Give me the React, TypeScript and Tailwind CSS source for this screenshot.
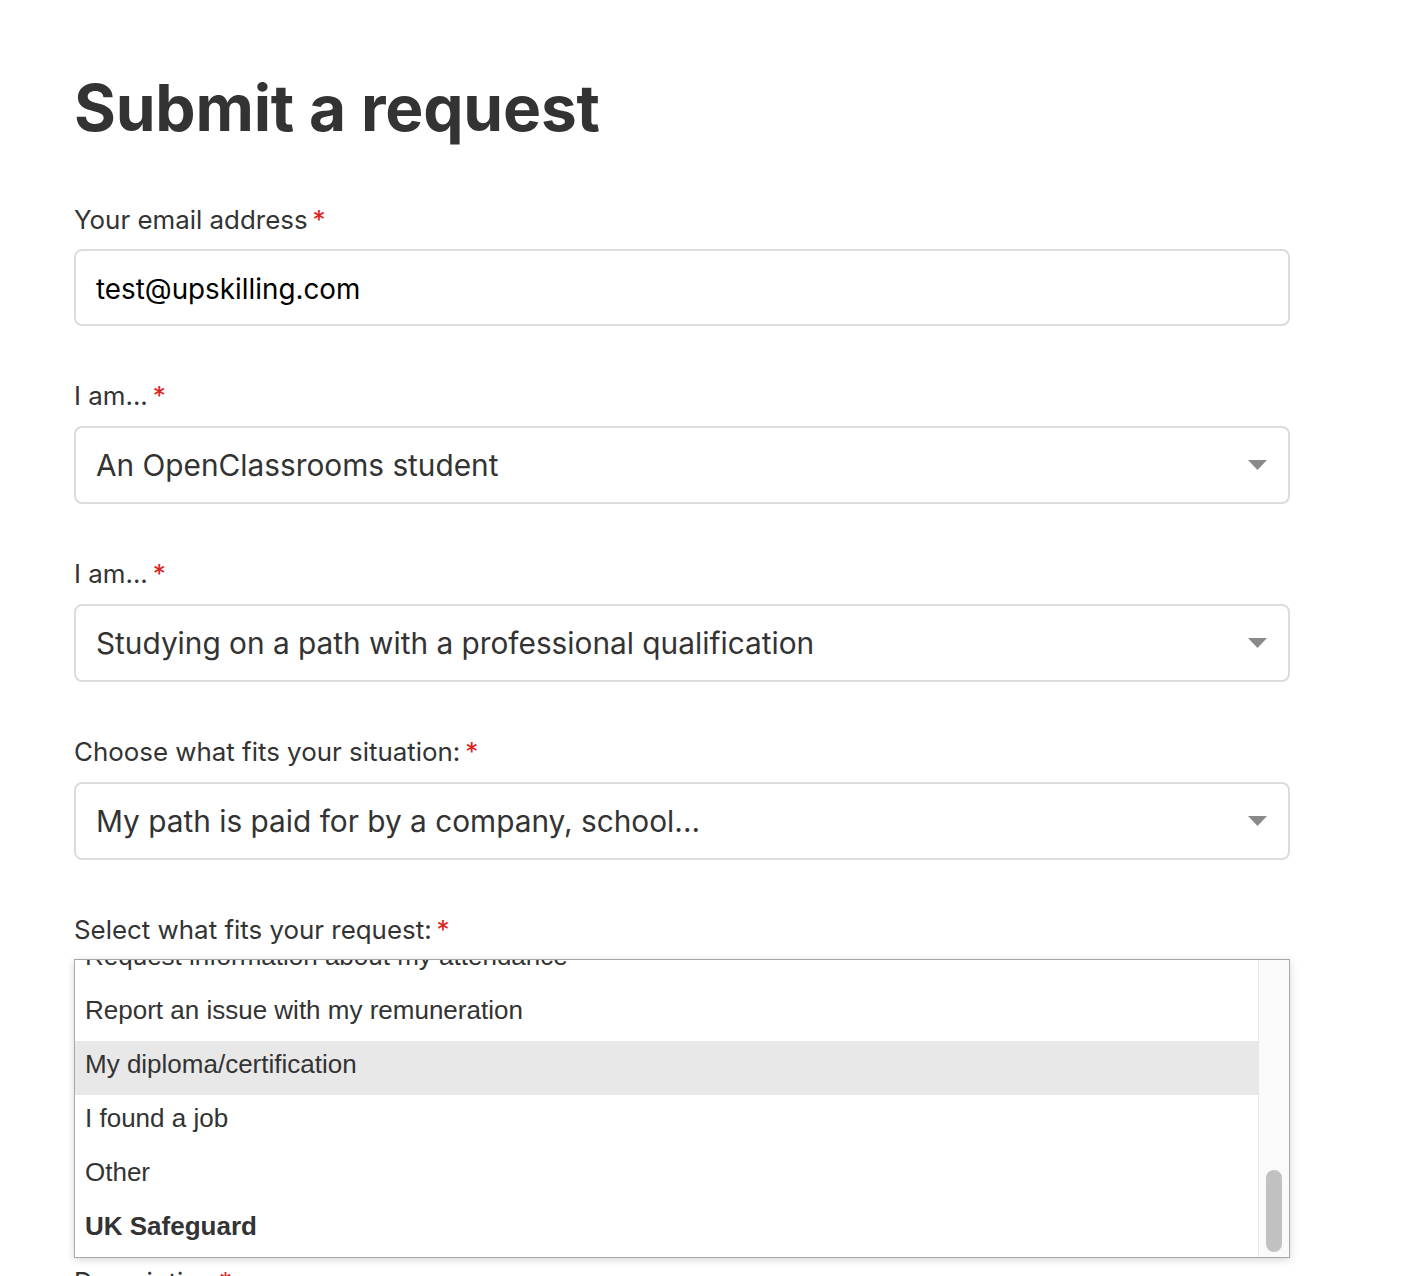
import React from "react";

const Label = ({ text }: { text: string }) => (
  <div className="text-[25.9px] leading-[38px] text-[#333] font-['Inter',sans-serif]">
    {text}
    <span className="text-[#e0201a] ml-[5px]">*</span>
  </div>
);

const Arrow = () => (
  <svg width="19" height="10" viewBox="0 0 19 10" className="shrink-0">
    <polygon points="0,0 19,0 9.5,10" fill="#8a8a8a" />
  </svg>
);

const Select = ({ value }: { value: string }) => (
  <div className="mt-[11px] h-[78px] rounded-[8px] border-2 border-[#dcdcdc] bg-white flex items-center pl-[20px] pr-[21px]">
    <span className="flex-1 text-[29.8px] text-[#333] font-['Inter',sans-serif]">{value}</span>
    <Arrow />
  </div>
);

const items: { t: string; hl?: boolean; b?: boolean }[] = [
  { t: "Request information about my attendance" },
  { t: "Report an issue with my remuneration" },
  { t: "My diploma/certification", hl: true },
  { t: "I found a job" },
  { t: "Other" },
  { t: "UK Safeguard", b: true },
];

export default function App() {
  return (
    <div className="bg-white min-h-[1276px] h-[1276px] overflow-hidden font-['Inter',sans-serif]">
      <div className="pl-[74px] w-[1290px] pt-[69px]">
        <h1 className="text-[64px] leading-[77px] font-bold text-[#333] tracking-[-0.2px]">Submit a request</h1>

        <div className="mt-[55px]">
          <Label text="Your email address" />
          <div className="mt-[10px] h-[77px] rounded-[8px] border-2 border-[#dcdcdc] bg-white flex items-center pl-[20px] pt-[4px]">
            <span className="text-[27.8px] text-black">test@upskilling.com</span>
          </div>
        </div>

        <div className="mt-[51px]">
          <Label text="I am..." />
          <Select value="An OpenClassrooms student" />
        </div>

        <div className="mt-[51px]">
          <Label text="I am..." />
          <Select value="Studying on a path with a professional qualification" />
        </div>

        <div className="mt-[51px]">
          <Label text="Choose what fits your situation:" />
          <Select value="My path is paid for by a company, school..." />
        </div>

        <div className="mt-[51px]">
          <Label text="Select what fits your request:" />
          <div className="mt-[10px] h-[299px] border-[1.5px] border-[#a8a8a8] bg-white shadow-[0_2px_8px_rgba(0,0,0,0.16)] flex overflow-hidden">
            <div className="flex-1 overflow-hidden font-['Liberation_Sans',Arial,sans-serif] text-[26px] text-[#333]">
              <div className="mt-[-27px]">
                {items.map((it) => (
                  <div
                    key={it.t}
                    className={
                      "h-[54px] flex items-center pl-[10px] pb-[8px] " +
                      (it.hl ? "bg-[#e8e8e8] " : "") +
                      (it.b ? "font-bold" : "")
                    }
                  >
                    {it.t}
                  </div>
                ))}
              </div>
            </div>
            <div className="w-[31px] bg-[#fafafa] border-l border-[#e6e6e6] flex flex-col justify-end items-center pb-[5px]">
              <div className="w-[16px] h-[82px] rounded-full bg-[#c1c1c1]" />
            </div>
          </div>
        </div>

        <div className="mt-[5px]">
          <Label text="Description" />
        </div>
      </div>
    </div>
  );
}
